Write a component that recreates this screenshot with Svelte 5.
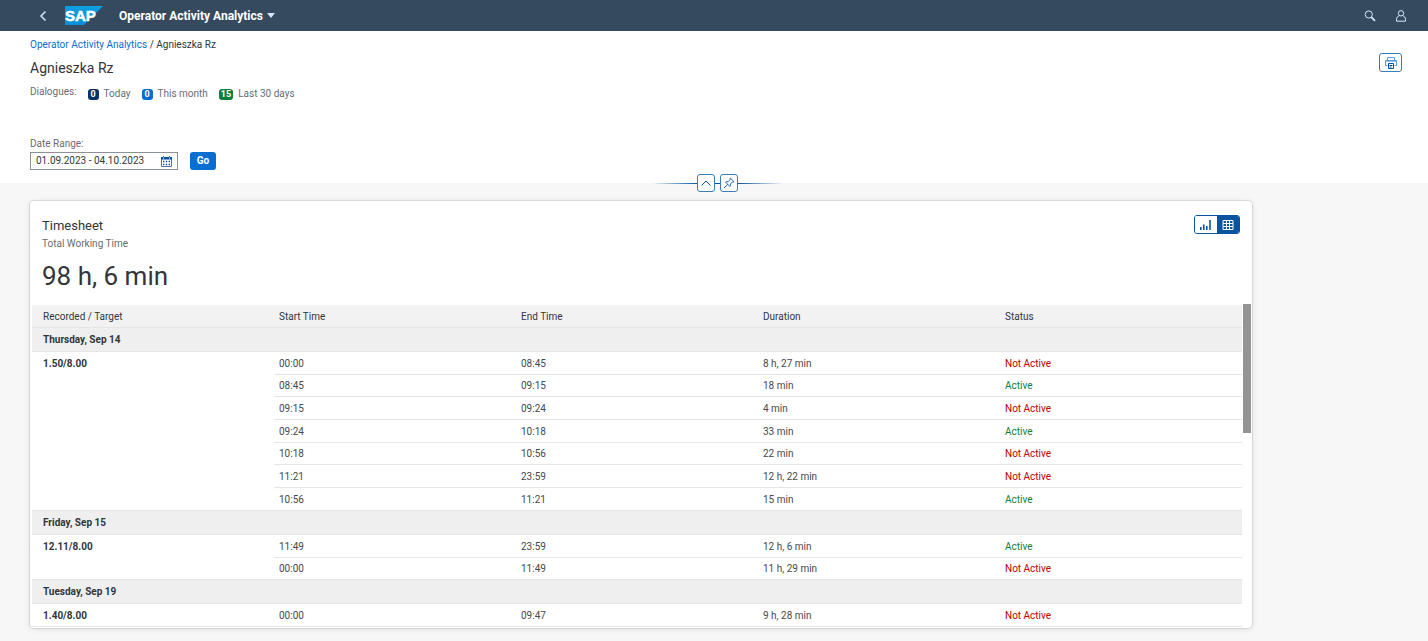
<script>
  const columns = ['Recorded / Target', 'Start Time', 'End Time', 'Duration', 'Status'];

  const dialogues = [
    { count: 0, label: 'Today', tone: 'navy' },
    { count: 0, label: 'This month', tone: 'blue' },
    { count: 15, label: 'Last 30 days', tone: 'green' }
  ];

  const days = [
    {
      date: 'Thursday, Sep 14',
      total: '1.50/8.00',
      rows: [
        ['00:00', '08:45', '8 h, 27 min', false],
        ['08:45', '09:15', '18 min', true],
        ['09:15', '09:24', '4 min', false],
        ['09:24', '10:18', '33 min', true],
        ['10:18', '10:56', '22 min', false],
        ['11:21', '23:59', '12 h, 22 min', false],
        ['10:56', '11:21', '15 min', true]
      ]
    },
    {
      date: 'Friday, Sep 15',
      total: '12.11/8.00',
      rows: [
        ['11:49', '23:59', '12 h, 6 min', true],
        ['00:00', '11:49', '11 h, 29 min', false]
      ]
    },
    {
      date: 'Tuesday, Sep 19',
      total: '1.40/8.00',
      rows: [['00:00', '09:47', '9 h, 28 min', false]]
    }
  ];

  let range = $state('01.09.2023 - 04.10.2023');
</script>

<header class="shell">
  <button class="plain back" aria-label="Back">
    <svg width="8" height="12" viewBox="0 0 8 12"><path d="M6.500 1.500 2 6l4.500 4.500" fill="none" stroke="#d1e8ff" stroke-width="1.500" /></svg>
  </button>
  <svg class="logo" width="38" height="19" viewBox="0 0 38 19" role="img" aria-label="SAP">
    <defs>
      <linearGradient id="sap" x1="0" y1="0" x2="0" y2="1">
        <stop offset="0" stop-color="#0a9fe0" />
        <stop offset="1" stop-color="#0a8fd8" />
      </linearGradient>
    </defs>
    <path d="M0 0h38L19 19H0z" fill="url(#sap)" />
    <text x="0" y="15" class="logo-text">SAP</text>
  </svg>
  <button class="plain title">
    Operator Activity Analytics
    <svg width="8" height="5" viewBox="0 0 8 5"><path d="M0 0h8L4 5z" fill="#d1e8ff" /></svg>
  </button>
  <div class="tools">
    <button class="plain" aria-label="Search">
      <svg width="12" height="12" viewBox="0 0 12 12" fill="none" stroke="#d1e8ff"><circle cx="4.800" cy="4.500" r="3.600" /><path d="m7.300 7.200 3.700 3.700" stroke-width="1.800" /></svg>
    </button>
    <button class="plain" aria-label="Profile">
      <svg width="12" height="12" viewBox="0 0 12 12" fill="none" stroke="#d1e8ff"><circle cx="6" cy="3.300" r="2.700" /><path d="M4.200 5.800C2.500 6.500 1.500 7.500 1.500 9.200v2h9v-2C10.500 7.500 9.500 6.500 7.800 5.800" /></svg>
    </button>
  </div>
</header>

<section class="head">
  <div class="top">
    <div>
      <nav class="crumbs"><a href="#home">Operator Activity Analytics</a> / Agnieszka Rz</nav>
      <h1>Agnieszka Rz</h1>
      <div class="dialogues">
        <span class="caption">Dialogues:</span>
        {#each dialogues as d}
          <span class="item"><b class={d.tone}>{d.count}</b>{d.label}</span>
        {/each}
      </div>
    </div>
    <button class="outlined print" aria-label="Print">
      <svg width="12" height="12" viewBox="0 0 12 12" fill="none" stroke="#0854a0"><path d="M2.500 3V.5h7V3" stroke="#5b9bd5" /><path d="M2.500 8.500h-2v-5h11v5h-2" stroke="#5b9bd5" /><path d="M1 4.500h10" stroke="#9cc3e6" /><path d="M3.500 6.500h5v5h-5z" /><path d="M4.500 8.500h3M4.500 10h2" /></svg>
    </button>
  </div>
  <form class="filter" onsubmit={(e) => e.preventDefault()}>
    <label for="range">Date Range:</label>
    <div class="line">
      <div class="field">
        <input id="range" bind:value={range} />
        <button type="button" class="plain" aria-label="Open calendar">
          <svg width="11" height="11" viewBox="0 0 11 11"><path d="M.5 1.500h10v9H.5z" fill="none" stroke="#3d7bb8" /><path d="M0 1h11v2.500H0zM2 0h1v1H2zM8 0h1v1H8z" fill="#0854a0" /><path d="M2 1.500h1v1H2zM8 1.500h1v1H8z" fill="#fff" /><path d="M2 5.500h7M2 8.500h7" stroke="#0854a0" stroke-width="1.400" stroke-dasharray="1.400" /></svg>
        </button>
      </div>
      <button class="go">Go</button>
    </div>
  </form>
  <div class="snap">
    <i class="rule left"></i>
    <button class="outlined" aria-label="Collapse header">
      <svg width="12" height="12" viewBox="0 0 12 12"><path d="m1.500 8.500 4.500-4.500 4.500 4.500" fill="none" stroke="#0854a0" /></svg>
    </button>
    <i class="link"></i>
    <button class="outlined" aria-label="Pin header">
      <svg width="12" height="12" viewBox="0 0 12 12" fill="none" stroke="#0854a0" stroke-width=".9"><path d="m7.300 1 3.700 3.700-1 .5-.6-.2-2 2c.3 1 .1 1.800-.5 2.500L2.600 5.200c.8-.6 1.500-.8 2.500-.5l2-2-.3-.7zM4.700 7.300 1 11" /></svg>
    </button>
    <i class="rule"></i>
  </div>
</section>

<main>
  <article class="card">
    <div class="card-head">
      <div>
        <h2>Timesheet</h2>
        <p>Total Working Time</p>
        <strong>98 h, 6 min</strong>
      </div>
      <div class="switch">
        <button aria-label="Chart view">
          <svg width="12" height="12" viewBox="0 0 12 12" fill="#0854a0"><path d="M0 8h1.600v3H0zM3 5.500h1.600V11H3zM6 7h1.600v4H6zM9.200 1h1.600v10H9.200z" /></svg>
        </button>
        <button class="on" aria-label="Table view">
          <svg width="12" height="12" viewBox="0 0 12 12" fill="none" stroke="#fff"><path d="M1 1.500h10v9H1zM1 4.500h10M1 7.500h10M4.500 1.500v9M7.500 1.500v9" /></svg>
        </button>
      </div>
    </div>
    <div class="scroller">
      <table>
        <thead>
          <tr>{#each columns as c}<th>{c}</th>{/each}</tr>
        </thead>
        {#each days as day}
          <tbody>
            <tr class="group"><th colspan="5">{day.date}</th></tr>
            {#each day.rows as [start, end, duration, active], i}
              <tr>
                {#if i === 0}<th class="total" rowspan={day.rows.length}>{day.total}</th>{/if}
                <td>{start}</td>
                <td>{end}</td>
                <td>{duration}</td>
                <td class={active ? 'active' : 'inactive'}>{active ? 'Active' : 'Not Active'}</td>
              </tr>
            {/each}
          </tbody>
        {/each}
      </table>
      <div class="track"><div class="thumb"></div></div>
    </div>
  </article>
</main>

<style>
  :global(body) {
    background: #f7f7f7;
    color: #32363a;
    font: 10px/14px Roboto, sans-serif;
  }
  button, input {
    font: inherit;
    color: inherit;
    padding: 0;
    margin: 0;
    border: 0;
    box-sizing: border-box;
  }
  svg { display: block; }
  h1, h2, p { margin: 0; font-weight: 400; }
  .plain {
    background: none;
    display: flex;
    align-items: center;
    justify-content: center;
  }
  .shell {
    display: flex;
    align-items: center;
    height: 31px;
    padding: 0 21px 0 39px;
    background: #354a5f;
  }
  .back { width: 8px; }
  .logo { margin: 0 16px 0 18px; }
  .logo-text {
    font: bold 15px "Liberation Sans", sans-serif;
    fill: #fff;
    stroke: #fff;
    stroke-width: 0.5;
  }
  .title {
    gap: 4px;
    color: #fff;
    font-size: 12px;
    font-weight: 700;
  }
  .tools {
    display: flex;
    gap: 19px;
    margin-left: auto;
  }
  .head {
    display: flow-root;
    background: #fff;
    padding: 7px 26px 0 30px;
  }
  .top {
    display: flex;
    justify-content: space-between;
    align-items: flex-start;
  }
  .crumbs a { color: #0a6ed1; text-decoration: none; }
  h1 {
    font-size: 14px;
    line-height: 20px;
    margin-top: 6px;
  }
  .dialogues {
    display: flex;
    align-items: flex-start;
    margin-top: 7px;
    color: #6a6d70;
  }
  .caption { margin-right: 11px; }
  .item {
    display: flex;
    align-items: center;
    gap: 5px;
    margin-right: 11px;
    padding-top: 2px;
  }
  .item b {
    min-width: 11px;
    padding: 0 2px;
    box-sizing: border-box;
    border-radius: 3px;
    color: #fff;
    font-size: 9px;
    line-height: 11px;
    text-align: center;
  }
  .navy { background: #0a3068; }
  .blue { background: #0a6ed1; }
  .green { background: #107e3e; }
  .outlined {
    display: flex;
    align-items: center;
    justify-content: center;
    width: 18px;
    height: 18px;
    background: #fff;
    border: 1px solid #3d7bb8;
    border-radius: 3px;
  }
  .outlined.print {
    width: 23px;
    height: 19px;
    margin-top: 15px;
  }
  .filter {
    margin-top: 36px;
    color: #6a6d70;
  }
  .filter label { display: block; }
  .line {
    display: flex;
    gap: 12px;
    margin-top: 1px;
  }
  .field {
    display: flex;
    align-items: center;
    width: 148px;
    height: 18px;
    padding: 0 5px;
    box-sizing: border-box;
    border: 1px solid #89919a;
  }
  .field input {
    flex: 1;
    min-width: 0;
    background: none;
    color: #32363a;
  }
  .go {
    width: 26px;
    height: 18px;
    border-radius: 3px;
    background: #0a6ed1;
    color: #fff;
    font-weight: 700;
  }
  .snap {
    display: flex;
    align-items: center;
    justify-content: center;
    height: 18px;
    margin: 4px 0 -9px 2px;
  }
  .rule {
    width: 45px;
    height: 1px;
    background: linear-gradient(to right, #0854a0, transparent);
  }
  .rule.left { background: linear-gradient(to left, #0854a0, transparent); }
  .link {
    width: 5px;
    height: 1px;
    background: #0854a0;
  }
  main {
    display: grid;
    grid-template-columns: 1222fr 146fr;
    padding: 18px 30px 14px;
  }
  .card {
    background: #fff;
    border-radius: 4px;
    box-shadow: 0 0 1px 1px rgba(0, 0, 0, 0.1), 0 1px 6px rgba(0, 0, 0, 0.1);
    overflow: hidden;
  }
  .card-head {
    display: flex;
    justify-content: space-between;
    align-items: flex-start;
    padding: 14px 12px 10px;
  }
  h2 {
    font-size: 13px;
    line-height: 22px;
  }
  .card-head p { color: #6a6d70; }
  .card-head strong {
    display: block;
    margin-top: 7px;
    font-size: 26px;
    font-weight: 400;
    line-height: 36px;
  }
  .switch {
    display: flex;
    border: 1px solid #0854a0;
    border-radius: 3px;
    overflow: hidden;
  }
  .switch button {
    display: flex;
    align-items: center;
    justify-content: center;
    width: 22px;
    height: 17px;
    background: #fff;
  }
  .switch .on { background: #0854a0; }
  .scroller {
    display: flex;
    align-items: flex-start;
    padding: 0 1px 1px 2px;
  }
  table {
    flex: 1;
    margin-top: 1px;
    table-layout: fixed;
    border-collapse: separate;
    border-spacing: 0;
  }
  tr { height: 23px; }
  tbody tr:nth-child(3n) { height: 22px; }
  th, td {
    width: 20%;
    padding: 1px 5px 0;
    border-bottom: 1px solid #e5e5e5;
    box-sizing: border-box;
    text-align: left;
    font-weight: 400;
  }
  td { color: #45494d; }
  th:first-child { padding-left: 11px; }
  thead th { background: #f2f2f2; }
  tbody .group { height: 24px; }
  .group th {
    background: #efefef;
    font-weight: 700;
  }
  th.total {
    padding-top: 5px;
    font-weight: 700;
    vertical-align: top;
  }
  td.active { color: #107e3e; }
  td.inactive { color: #bb0000; }
  .track {
    width: 8px;
    margin-left: 1px;
  }
  .thumb {
    height: 129px;
    background: #949494;
  }
</style>
